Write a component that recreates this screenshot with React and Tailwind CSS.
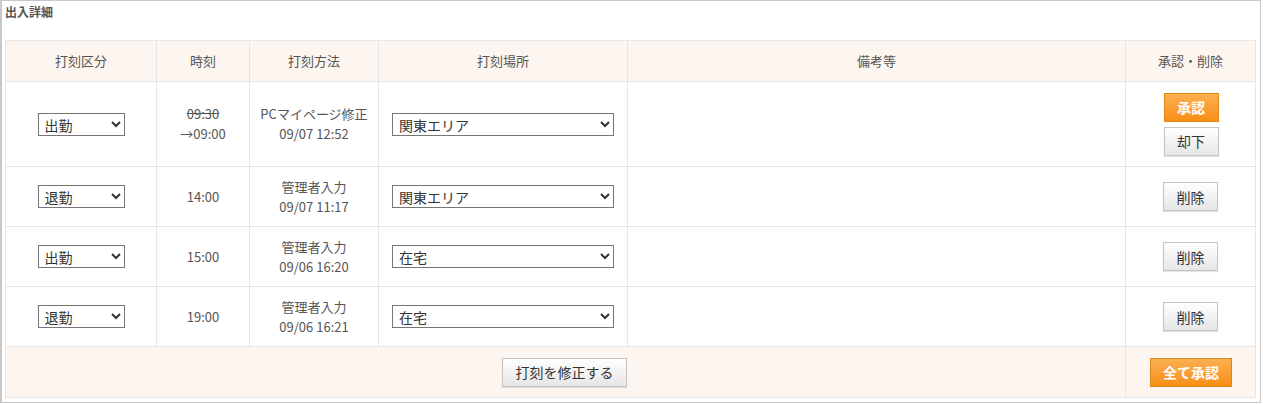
import React from "react";

const font = { fontFamily: '"Noto Sans CJK JP", "Noto Sans", sans-serif' };

function Sel({ value, w, options }) {
  return (
    <select
      defaultValue={value}
      className={`${w} h-[23px] border border-[#767676] bg-white text-[14px] text-[#333] pl-[2px] align-middle`}
      style={font}
    >
      {options.map((o) => (
        <option key={o}>{o}</option>
      ))}
    </select>
  );
}

function GrayBtn({ children, w = "w-[55px]" }) {
  return (
    <button
      className={`${w} h-[29px] border border-[#c4c4c4] bg-gradient-to-b from-white to-[#e6e6e6] text-[14px] text-[#333] shadow-[0_1px_1px_rgba(0,0,0,0.1)]`}
    >
      {children}
    </button>
  );
}

function OrangeBtn({ children, w = "w-[55px]" }) {
  return (
    <button
      className={`${w} h-[29px] border border-[#e0871a] bg-gradient-to-b from-[#fbb04f] to-[#f78e10] text-[14px] text-white font-bold`}
    >
      {children}
    </button>
  );
}

const kinds = ["出勤", "退勤"];
const places = ["関東エリア", "在宅"];

const rows = [
  { kind: "出勤", time: null, method: "PCマイページ修正", date: "09/07 12:52", place: "関東エリア", approve: true, h: "h-[85px]" },
  { kind: "退勤", time: "14:00", method: "管理者入力", date: "09/07 11:17", place: "関東エリア", h: "h-[60px]" },
  { kind: "出勤", time: "15:00", method: "管理者入力", date: "09/06 16:20", place: "在宅", h: "h-[60px]" },
  { kind: "退勤", time: "19:00", method: "管理者入力", date: "09/06 16:21", place: "在宅", h: "h-[60px]" },
];

export default function App() {
  const td = "border border-[#e6e6e6] text-center align-middle p-0";
  return (
    <div className="w-[1263px] h-[404px] bg-white" style={font}>
      <div className="w-[1261px] h-[403px] border border-[#c8c8c8] border-l-2 pl-[3px] pr-[5px] text-[#555]">
        <div className="h-[39px] pt-[3px] text-[12px] font-bold text-[#555] leading-[16px]">出入詳細</div>
        <table className="w-[1250px] border-collapse table-fixed text-[13px] text-[#555] leading-[20px]">
          <colgroup>
            <col className="w-[151px]" />
            <col className="w-[93px]" />
            <col className="w-[129px]" />
            <col className="w-[249px]" />
            <col className="w-[498px]" />
            <col className="w-[130px]" />
          </colgroup>
          <thead>
            <tr className="h-[41px] bg-[#fdf5ef]">
              <th className={`${td} font-normal`}>打刻区分</th>
              <th className={`${td} font-normal`}>時刻</th>
              <th className={`${td} font-normal`}>打刻方法</th>
              <th className={`${td} font-normal`}>打刻場所</th>
              <th className={`${td} font-normal`}>備考等</th>
              <th className={`${td} font-normal`}>承認・削除</th>
            </tr>
          </thead>
          <tbody>
            {rows.map((r, i) => (
              <tr key={i} className={r.h}>
                <td className={td}>
                  <Sel value={r.kind} w="w-[87px]" options={kinds} />
                </td>
                <td className={td}>
                  {r.time ? (
                    r.time
                  ) : (
                    <div>
                      <div className="line-through">09:30</div>
                      <div>→09:00</div>
                    </div>
                  )}
                </td>
                <td className={td}>
                  <div>{r.method}</div>
                  <div>{r.date}</div>
                </td>
                <td className={`${td} text-left pl-[13px]`}>
                  <Sel value={r.place} w="w-[222px]" options={places} />
                </td>
                <td className={td}></td>
                <td className={td}>
                  {r.approve ? (
                    <div className="flex flex-col items-center gap-[5px] pl-[1px]">
                      <OrangeBtn>承認</OrangeBtn>
                      <GrayBtn>却下</GrayBtn>
                    </div>
                  ) : (
                    <GrayBtn>削除</GrayBtn>
                  )}
                </td>
              </tr>
            ))}
            <tr className="h-[51px] bg-[#fdf5ef]">
              <td className={td} colSpan={5}>
                <div className="pr-[2px]">
                  <GrayBtn w="w-[125px]">打刻を修正する</GrayBtn>
                </div>
              </td>
              <td className={td}>
                <div className="pl-[1px]">
                  <OrangeBtn w="w-[82px]">全て承認</OrangeBtn>
                </div>
              </td>
            </tr>
          </tbody>
        </table>
      </div>
    </div>
  );
}
